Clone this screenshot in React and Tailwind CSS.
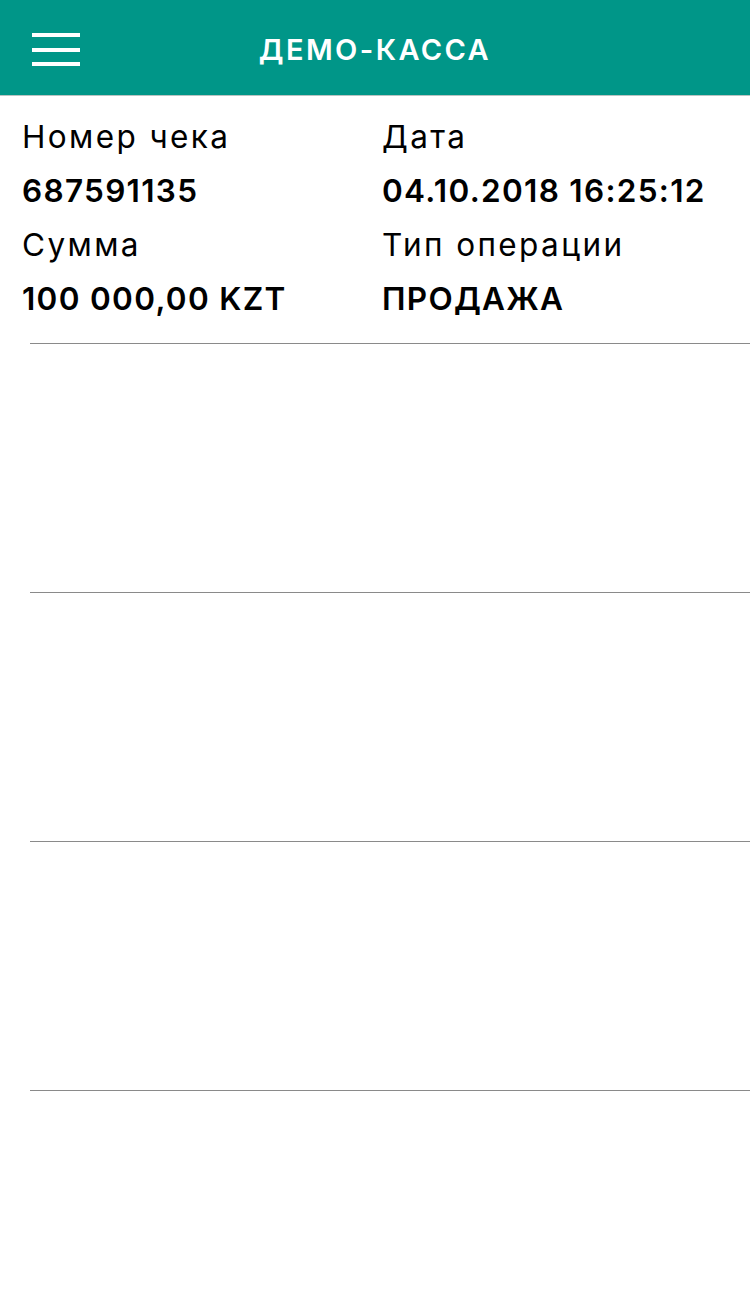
export default function App() {
  const fields = [
    { label: "Номер чека", value: "687591135" },
    { label: "Дата", value: "04.10.2018 16:25:12" },
    { label: "Сумма", value: "100 000,00 KZT" },
    { label: "Тип операции", value: "ПРОДАЖА" },
  ];

  return (
    <div className="min-h-screen bg-white text-black" style={{ fontFamily: "Inter, 'Noto Sans', sans-serif" }}>
      <header className="relative h-[96px] bg-[#009688] border-b border-[#b9c4c2] flex items-center justify-center">
        <button className="absolute left-[32px] top-[33px] flex flex-col gap-[10.5px]">
          <span className="block w-[48px] h-[4px] bg-white" />
          <span className="block w-[48px] h-[4px] bg-white" />
          <span className="block w-[48px] h-[4px] bg-white" />
        </button>
        <h1 className="text-white text-[29px] font-semibold tracking-[2.4px] mt-[4px]">ДЕМО-КАССА</h1>
      </header>

      <div className="grid grid-cols-[360px_1fr] pl-[22px] pt-[14px] text-[31.5px] leading-[54px]">
        {fields.map((f) => (
          <div key={f.label}>
            <div className="font-normal tracking-[2.4px]">{f.label}</div>
            <div className="font-semibold tracking-[1.3px]">{f.value}</div>
          </div>
        ))}
      </div>

      <div className="ml-[30px] mt-[17px]">
        <div className="h-[249px] border-t border-[#8a8a8a]" />
        <div className="h-[249px] border-t border-[#8a8a8a]" />
        <div className="h-[249px] border-t border-[#8a8a8a]" />
        <div className="h-[208px] border-t border-[#8a8a8a]" />
      </div>
    </div>
  );
}
